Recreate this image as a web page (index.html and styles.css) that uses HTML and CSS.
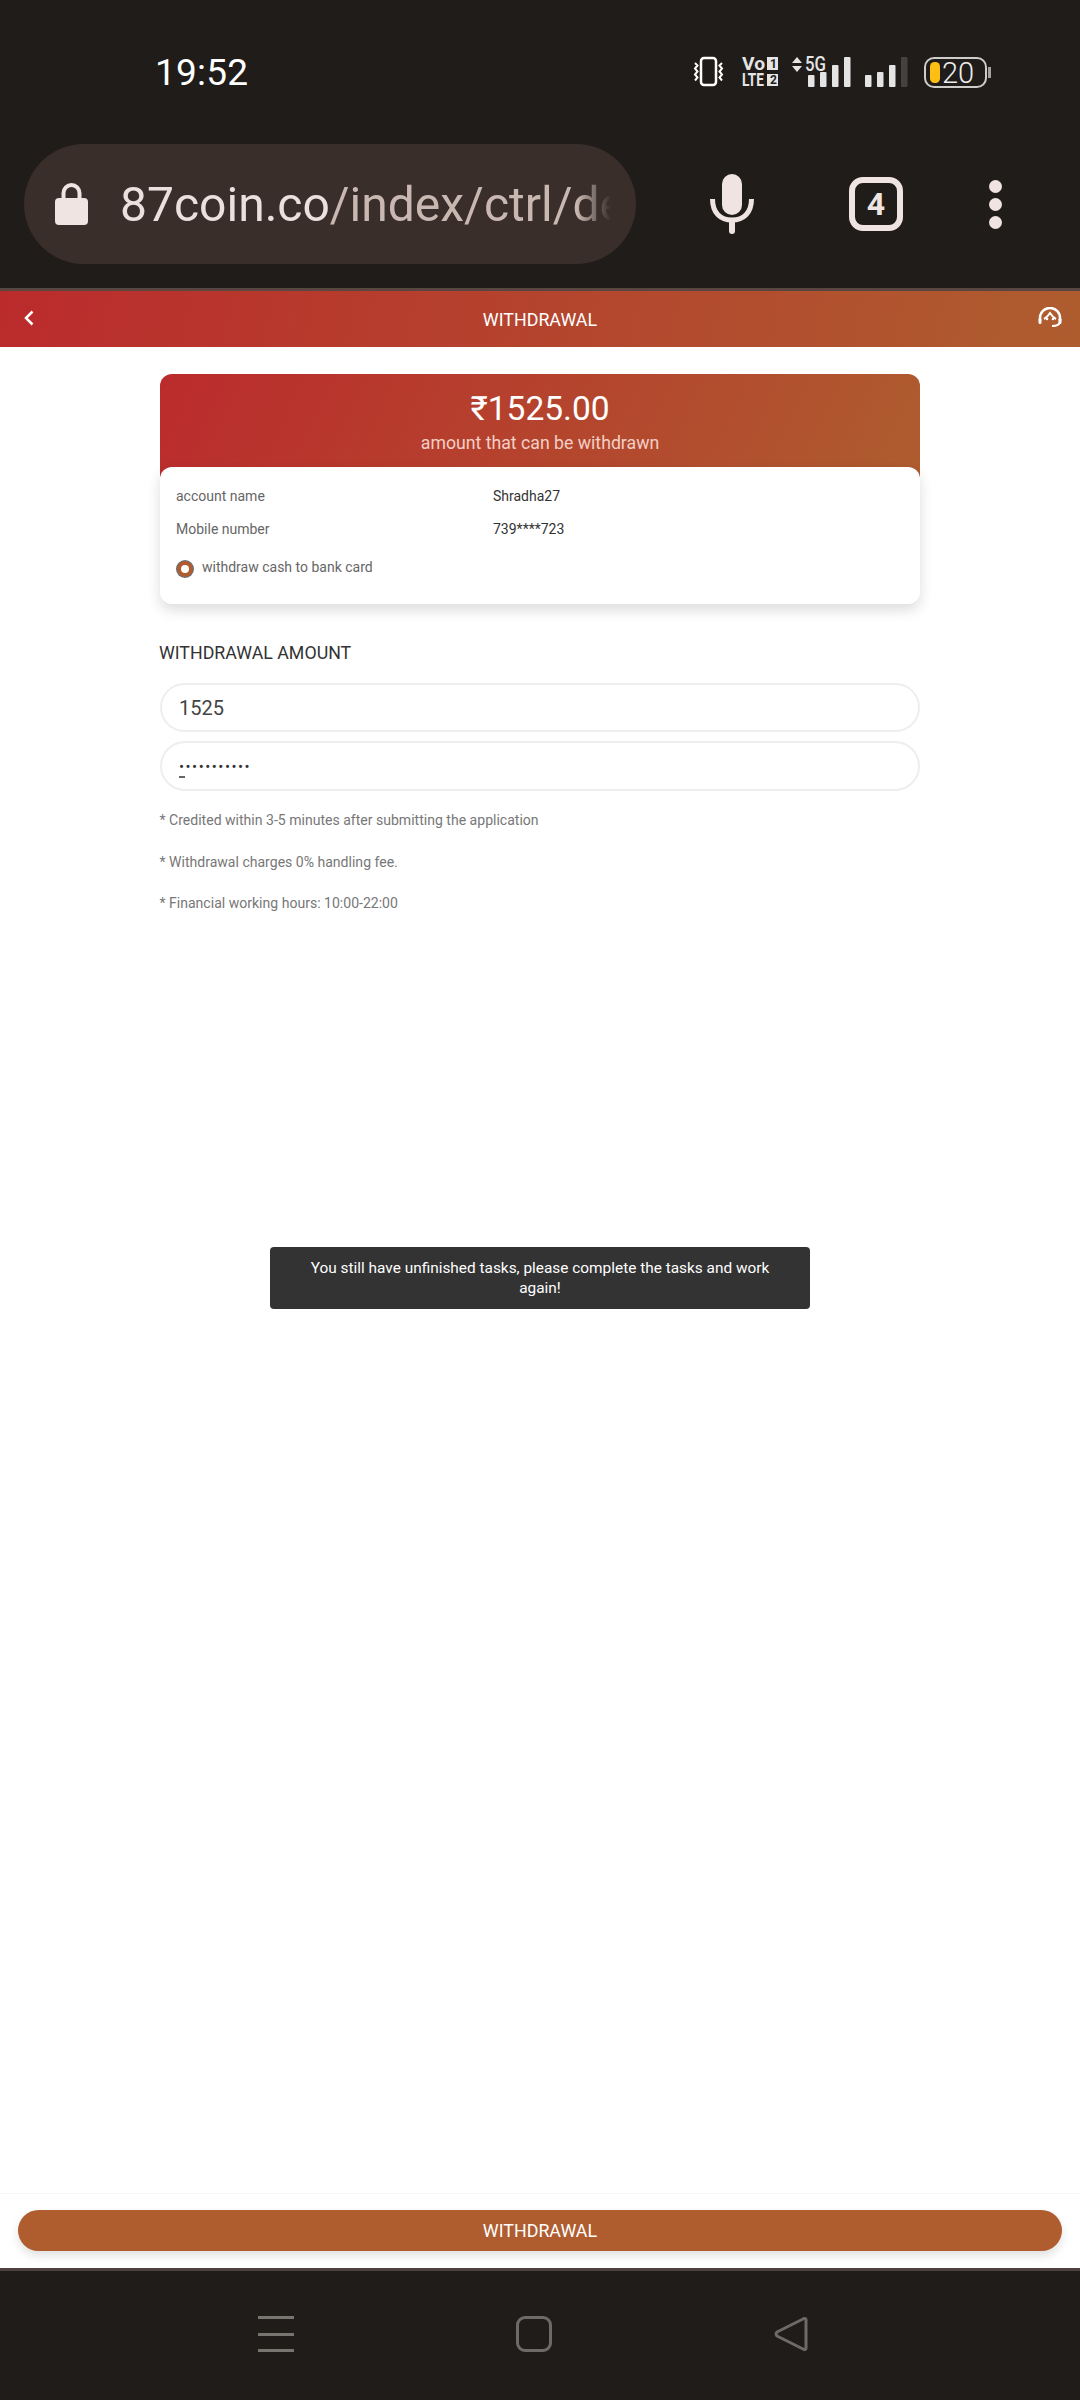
FILE: index.html
```html
<!DOCTYPE html>
<html lang="en">
<head>
    <meta charset="UTF-8">
    <meta name="viewport" content="width=device-width, initial-scale=1.0">
    <title>Withdrawal</title>
    <link rel="stylesheet" href="styles.css">
</head>
<body>
    <div class="browser-top">
        <div class="status-bar">
            <span class="clock">19:52</span>
            <svg class="status-icons" width="300" height="40" viewBox="0 0 300 40">
                <!-- y in here = screen y - 52, x = screen x - 692 -->
                <g fill="none" stroke="#fff">
                    <rect x="9" y="6" width="15" height="27" rx="3" stroke-width="2.5"/>
                    <path d="M3 11l2.500 2.500-2.500 3 2.500 3-2.500 3 2.500 3-2.500 3M30 11l-2.500 2.500 2.500 3-2.500 3 2.500 3-2.500 3 2.500 3" stroke-width="2"/>
                </g>
                <g fill="#e4e4e4">
                    <text class="tiny" x="50" y="18" textLength="23" lengthAdjust="spacingAndGlyphs">Vo</text>
                    <text class="tiny" x="50" y="34" textLength="22" lengthAdjust="spacingAndGlyphs">LTE</text>
                    <rect x="75" y="5" width="11" height="13"/>
                    <rect x="75" y="22" width="11" height="12"/>
                    <path d="M100 11l5-6 5 6zM100 14l5 6 5-6z"/>
                    <text class="five-g" x="113" y="19" textLength="21" lengthAdjust="spacingAndGlyphs">5G</text>
                    <rect x="116" y="23" width="6.500" height="12" rx="1"/>
                    <rect x="128" y="20" width="6.500" height="15" rx="1"/>
                    <rect x="140" y="13" width="6.500" height="22" rx="1"/>
                    <rect x="152" y="5" width="6.500" height="30" rx="1"/>
                    <rect x="173" y="23" width="6.500" height="12" rx="1"/>
                    <rect x="185" y="20" width="6.500" height="15" rx="1"/>
                    <rect x="197" y="13" width="6.500" height="22" rx="1"/>
                    <rect x="209" y="5" width="6.500" height="30" rx="1" fill="#45413e"/>
                </g>
                <text class="tiny-dark" x="78" y="16">1</text>
                <text class="tiny-dark" x="78" y="32">2</text>
                <rect x="233" y="6" width="61" height="29" rx="9" fill="none" stroke="#cfcdcb" stroke-width="2"/>
                <rect x="238" y="10" width="10" height="21" rx="4.500" fill="#fdbf14"/>
                <text class="batt" x="250" y="31">20</text>
                <rect x="296" y="15" width="3" height="11" fill="#a5a3a1"/>
            </svg>
        </div>
        <div class="toolbar">
            <div class="url-pill">
                <svg class="lock" width="33" height="42" viewBox="0 0 33 42">
                    <path d="M8.500 18v-8a8 8 0 0 1 16 0v8" fill="none" stroke="#efe4e1" stroke-width="4"/>
                    <rect y="15" width="33" height="27" rx="4" fill="#efe4e1"/>
                </svg>
                <div class="url"><b>87coin.co</b>/index/ctrl/de</div>
            </div>
            <svg class="mic" width="44" height="60" viewBox="0 0 44 60">
                <rect x="12" y="0" width="20" height="41" rx="10" fill="#efe4e1"/>
                <path d="M2.500 25c0 14 8 21 19.500 21s19.500-7 19.500-21" fill="none" stroke="#efe4e1" stroke-width="5"/>
                <rect x="19" y="44" width="6" height="16" rx="3" fill="#efe4e1"/>
            </svg>
            <div class="tabs">4</div>
            <div class="dots"><i></i><i></i><i></i></div>
        </div>
    </div>

    <div class="page-head">
        <svg class="back" width="12" height="18" viewBox="0 0 12 18">
            <path d="M9.500 2.500L3 9l6.500 6.500" fill="none" stroke="#fff" stroke-width="2.500"/>
        </svg>
        <span class="page-title">WITHDRAWAL</span>
        <svg class="support" width="24" height="21" viewBox="0 0 24 21">
            <path d="M2 14v-3a10 10 0 0 1 20 0v3" fill="none" stroke="#fff" stroke-width="2.500"/>
            <path d="M6 12c2-1 4-3 6-6 2 3 4 5 6 6" fill="none" stroke="#fff" stroke-width="2"/>
            <circle cx="9" cy="12" r="1.300" fill="#fff"/>
            <circle cx="15" cy="12" r="1.300" fill="#fff"/>
            <path d="M22 14c0 3-3 5-8 5" fill="none" stroke="#fff" stroke-width="2"/>
            <rect x="0.500" y="11" width="3" height="6" rx="1.500" fill="#fff"/>
            <rect x="20.500" y="11" width="3" height="6" rx="1.500" fill="#fff"/>
        </svg>
    </div>

    <main class="content">
        <div class="balance">
            <div class="balance-value">₹1525.00</div>
            <div class="balance-label">amount that can be withdrawn</div>
        </div>
        <div class="account">
            <div class="account-row">
                <span class="account-key">account name</span>
                <span class="account-val">Shradha27</span>
            </div>
            <div class="account-row">
                <span class="account-key">Mobile number</span>
                <span class="account-val">739****723</span>
            </div>
            <div class="method">
                <span class="radio"></span>
                <span>withdraw cash to bank card</span>
            </div>
        </div>

        <h2 class="section-title">WITHDRAWAL AMOUNT</h2>
        <div class="field">1525</div>
        <div class="field field-pass">
            <span class="pass-dots">•••••••••••</span>
            <span class="pass-caret"></span>
        </div>

        <p class="note">* Credited within 3-5 minutes after submitting the application</p>
        <p class="note">* Withdrawal charges 0% handling fee.</p>
        <p class="note">* Financial working hours: 10:00-22:00</p>

        <div class="toast">You still have unfinished tasks, please complete the tasks and work again!</div>
    </main>

    <div class="footer-bar">
        <button class="submit" type="button">WITHDRAWAL</button>
    </div>

    <div class="nav-bar">
        <div class="nav-menu"><i></i><i></i><i></i></div>
        <div class="nav-home"></div>
        <svg class="nav-back" width="34" height="36" viewBox="0 0 34 36">
            <path d="M30 2.500a1.500 1.500 0 0 1 2 1.500v28a1.500 1.500 0 0 1-2 1.500L3 20a3 3 0 0 1 0-4z" fill="none" stroke="#6d6b68" stroke-width="3" stroke-linejoin="round"/>
        </svg>
    </div>
</body>
</html>
```

FILE: styles.css
```css
* {
    box-sizing: border-box;
}
body {
    margin: 0;
    width: 1080px;
    height: 2400px;
    display: flex;
    flex-direction: column;
    font-family: Roboto, "Liberation Sans", sans-serif;
    background-color: #fff;
    color: #333;
}

/* browser chrome */
.browser-top {
    height: 291px;
    background-color: #201c19;
    border-bottom: 3px solid #5a4640;
    flex-shrink: 0;
}
.status-bar {
    height: 144px;
    display: flex;
    align-items: center;
    justify-content: space-between;
    padding: 0 0 0 155px;
}
.clock {
    font-size: 37px;
    color: #fff;
    letter-spacing: 0.2px;
}
.status-icons {
    margin-right: 88px;
}
.status-icons text {
    font-family: Roboto, sans-serif;
}
.tiny {
    font-size: 18px;
    font-weight: 700;
}
.tiny-dark {
    font-size: 12px;
    font-weight: 700;
    fill: #201c19;
}
.five-g {
    font-size: 21px;
    font-weight: 500;
}
.batt {
    font-size: 29px;
    font-weight: 300;
    fill: #eeeeee;
}
.toolbar {
    height: 120px;
    display: flex;
    align-items: center;
    padding-left: 24px;
}
.url-pill {
    width: 612px;
    height: 120px;
    border-radius: 60px;
    background-color: #3a2e2a;
    display: flex;
    align-items: center;
    padding-left: 31px;
    flex-shrink: 0;
}
.lock {
    flex-shrink: 0;
}
.url {
    margin-left: 32px;
    width: 491px;
    overflow: hidden;
    white-space: nowrap;
    font-size: 48px;
    color: #c9b8b2;
    -webkit-mask-image: linear-gradient(to right, #000 93%, transparent 100%);
    mask-image: linear-gradient(to right, #000 93%, transparent 100%);
}
.url b {
    font-weight: 400;
    color: #ebe0dd;
}
.mic {
    margin-left: 74px;
}
.tabs {
    margin-left: 95px;
    width: 54px;
    height: 54px;
    border: 6px solid #efe4e1;
    border-radius: 14px;
    color: #efe4e1;
    font-size: 32px;
    font-weight: 700;
    display: flex;
    align-items: center;
    justify-content: center;
}
.dots {
    margin-left: 86px;
    display: flex;
    flex-direction: column;
    gap: 5px;
}
.dots i {
    width: 13px;
    height: 13px;
    border-radius: 50%;
    background-color: #efe4e1;
}

/* page header */
.page-head {
    height: 56px;
    flex-shrink: 0;
    display: grid;
    grid-template-columns: 1fr auto 1fr;
    align-items: center;
    padding: 0 18px;
    background: linear-gradient(100deg, #bb2b2c, #ae5d2f);
}
.page-title {
    font-size: 17.850px;
    color: #fff;
}
.back {
    margin: -3px 0 0 5px;
}
.support {
    margin-top: -3px;
    justify-self: end;
}

.content {
    flex: 1;
    position: relative;
    padding: 27px 160px 0;
}
.balance {
    height: 139px;
    border-radius: 12px 12px 0 0;
    background: linear-gradient(115deg, #bb2b2c, #ae5d2f);
    color: #fff;
    text-align: center;
    padding-top: 16px;
}
.balance-value {
    font-size: 33.500px;
    line-height: 38px;
}
.balance-label {
    font-size: 17.700px;
    line-height: 24px;
    margin-top: 3px;
    color: #f3cfc6;
}
.account {
    height: 137px;
    margin-top: -46px;
    position: relative;
    background-color: #fff;
    border-radius: 12px;
    box-shadow: 0 6px 14px rgba(0, 0, 0, 0.14);
    padding: 12px 16px 0;
}
.account-row {
    display: flex;
    height: 33px;
    align-items: center;
    font-size: 14px;
}
.account-key {
    width: 317px;
    color: #666;
}
.account-val {
    color: #333;
}
.method {
    display: flex;
    align-items: center;
    gap: 8px;
    margin-top: 12px;
    font-size: 14px;
    color: #666;
}
.radio {
    width: 16px;
    height: 16px;
    margin: 4px 1px 0;
    border-radius: 50%;
    background-color: #fff;
    border: 4px solid #af5c2f;
    box-shadow: 0 0 0 1px #5f7282;
}
.section-title {
    margin: 36px 0 0 -1px;
    font-size: 17.800px;
    line-height: 25px;
    font-weight: 400;
    color: #333;
}
.field {
    height: 49px;
    margin-top: 18px;
    padding-left: 17px;
    border: 2px solid #eee;
    border-radius: 25px;
    display: flex;
    align-items: center;
    font-size: 20px;
    color: #444;
}
.field-pass {
    height: 50px;
    margin-top: 9px;
    position: relative;
    display: block;
    padding-top: 10px;
}
.pass-dots {
    font-size: 15px;
    line-height: 20px;
    letter-spacing: 1.500px;
    color: #333;
}
.pass-caret {
    position: absolute;
    left: 17px;
    top: 33px;
    width: 6px;
    height: 2px;
    background-color: #666;
}
.note {
    margin: 0 0 0 -0.500px;
    height: 41.500px;
    line-height: 41.500px;
    font-size: 14.050px;
    color: #777;
}
.field-pass + .note {
    margin-top: 9px;
}
.toast {
    position: absolute;
    left: 270px;
    top: 900px;
    width: 540px;
    height: 62px;
    padding: 11px 30px;
    border-radius: 4px;
    background-color: #333;
    color: #fff;
    font-size: 15.400px;
    line-height: 20px;
    text-align: center;
}

/* bottom */
.footer-bar {
    height: 75px;
    flex-shrink: 0;
    padding-top: 16px;
    padding-left: 18px;
    padding-right: 18px;
    border-top: 1px solid #f7f7f7;
}
.submit {
    display: block;
    width: 100%;
    height: 41px;
    border: 0;
    border-radius: 21px;
    background-color: #af5c2f;
    color: #fff;
    font-family: inherit;
    font-size: 17.850px;
    box-shadow: 0 5px 10px rgba(0, 0, 0, 0.12);
}
.nav-bar {
    height: 132px;
    flex-shrink: 0;
    background-color: #201c19;
    border-top: 3px solid #4e403c;
    display: flex;
    align-items: flex-start;
    padding: 45px 0 0 258px;
}
.nav-menu {
    width: 36px;
    height: 36px;
    display: flex;
    flex-direction: column;
    justify-content: space-between;
}
.nav-menu i {
    height: 3px;
    background-color: #77756f;
}
.nav-home {
    margin-left: 222px;
    width: 36px;
    height: 36px;
    border: 3px solid #6d6b68;
    border-radius: 9px;
}
.nav-back {
    margin-left: 222px;
}
```
